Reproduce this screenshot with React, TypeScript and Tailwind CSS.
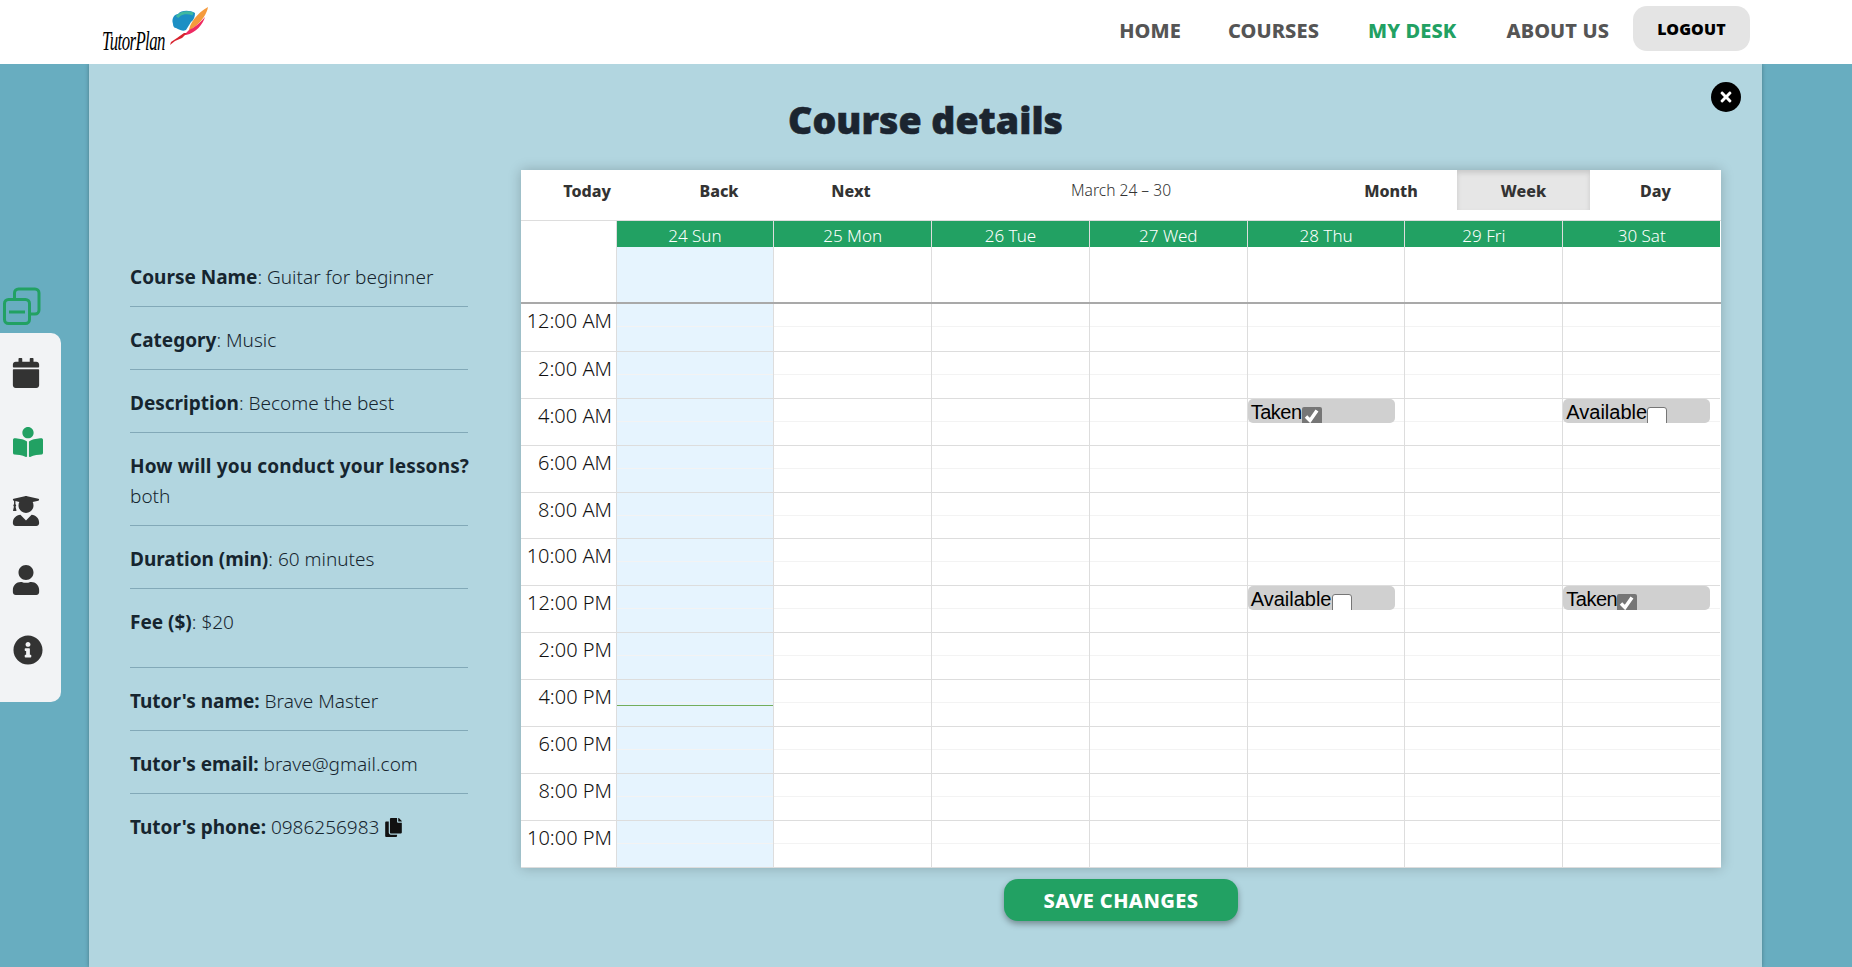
import { FaBookReader, FaCalendar, FaCopy, FaInfoCircle, FaTimes, FaUser, FaUserGraduate } from "react-icons/fa";

const font = "font-['Noto_Sans','Open_Sans',sans-serif]";

const times = ["12:00 AM", "2:00 AM", "4:00 AM", "6:00 AM", "8:00 AM", "10:00 AM", "12:00 PM", "2:00 PM", "4:00 PM", "6:00 PM", "8:00 PM", "10:00 PM"];
const days = ["24 Sun", "25 Mon", "26 Tue", "27 Wed", "28 Thu", "29 Fri", "30 Sat"];

// day index -> row index -> slot state
const events: Record<string, boolean> = { "4-2": true, "6-2": false, "4-6": false, "6-6": true };

function Slot({ taken }: { taken: boolean }) {
  return (
    <div className="absolute left-0 top-0 z-10 flex h-6 w-[147px] overflow-hidden rounded-[5px] bg-[#d0d0d0] pl-[3px] font-['Liberation_Sans',sans-serif] text-[20px] leading-6 text-black">
      <span className={`leading-[26px] ${taken ? "tracking-[-0.5px]" : ""}`}>{taken ? "Taken" : "Available"}</span>
      {taken ? (
        <span className="mt-2 flex h-5 w-5 shrink-0 items-start justify-center rounded-[2px] bg-[#767676]">
          <svg viewBox="0 0 20 20" className="h-5 w-5">
            <path d="M4 9.5 L8 13.5 L15 3.5" fill="none" stroke="#fff" strokeWidth="3.5" />
          </svg>
        </span>
      ) : (
        <span className="mt-2 h-5 w-5 shrink-0 rounded-[3px] border border-[#767676] bg-white" />
      )}
    </div>
  );
}

function Info({ label, value, tall, boldColon }: { label: string; value: string; tall?: boolean; boldColon?: boolean }) {
  return (
    <div className={`border-b border-[#82a9b8] pt-[18px] ${tall ? "pb-[30px]" : "pb-[14px]"}`}>
      <b className="font-bold">{label}{boldColon && ":"}</b>{!boldColon && ":"} {value}
    </div>
  );
}

function Calendar() {
  return (
    <div className="w-[1200px] border-b border-[#ddd] bg-white shadow-[0_0_12px_rgba(0,0,0,0.22)]">
      <div className="flex h-[50px] items-start text-[16px] font-extrabold text-[#333]">
        <button className="h-10 w-[132px] pt-[2px]">Today</button>
        <button className="h-10 w-[132px] pt-[2px]">Back</button>
        <button className="h-10 w-[132px] pt-[2px]">Next</button>
        <div className="h-10 flex-1 text-center text-[15.6px] font-light leading-10 text-[#333]">March 24 – 30</div>
        <button className="h-10 w-[132px] pt-[2px]">Month</button>
        <button className="h-10 w-[133px] bg-[#e6e6e6] pt-[2px] shadow-[inset_0_3px_5px_rgba(0,0,0,0.125)]">Week</button>
        <button className="h-10 w-[131px] pt-[2px]">Day</button>
      </div>

      <div className="grid grid-cols-[94.5px_repeat(7,157.8px)] border-t border-[#ddd]">
        <div className="h-[81px]" />
        {days.map((day, i) => (
          <div key={day} className={`h-[81px] border-l border-[#ddd] ${i === 0 ? "bg-[#e6f4fe]" : ""}`}>
            <div className="h-[26px] bg-[#22a163] text-center text-[17px] font-light leading-[29px] text-white">{day}</div>
          </div>
        ))}
      </div>

      <div className="grid grid-cols-[94.5px_repeat(7,157.8px)] border-t-2 border-[#a9a9a9]">
        {times.map((time, r) => (
          <div key={time} className="contents">
            <div className={`h-[46.9px] pr-[3.5px] text-right text-[20px] font-light leading-[34px] text-[#111] ${r ? "border-t border-[#ddd]" : ""}`}>{time}</div>
            {days.map((day, d) => (
              <div
                key={day}
                className={`relative h-[46.9px] border-l border-[#ddd] ${r ? "border-t border-t-[#ddd]" : ""} ${d === 0 ? "bg-[#e6f4fe]" : ""}`}
              >
                <div className="h-[23px] border-b border-[#f3f3f3]" />
                {`${d}-${r}` in events && <Slot taken={events[`${d}-${r}`]} />}
                {d === 0 && r === 8 && <div className="absolute inset-x-0 top-[25px] h-px bg-[#74ad5a]" />}
              </div>
            ))}
          </div>
        ))}
      </div>
    </div>
  );
}

export default function App() {
  return (
    <div className={`flex h-[967px] flex-col overflow-hidden bg-[#68adc0] ${font}`}>
      <header className="relative z-20 flex h-16 shrink-0 items-center bg-white pl-[102px] pr-[102px]">
        <div className="relative h-16 w-[110px]">
          <span className="absolute left-0 top-[25px] origin-left scale-x-[0.6] font-['Liberation_Serif',serif] text-[28px] italic leading-8 tracking-[-1px] text-black">TutorPlan</span>
          <svg viewBox="0 0 110 64" className="absolute inset-0">
            <path d="M71 24 C69 18 73 14 76 14 C79 10 88 10 93 13 C93 16 92 20 89 22 L84 30 C80 32 76 29 74 28 C72 28 71 26 71 24Z" fill="#1c8fc4" />
            <path d="M75 17 C79 12 86 12 91 14" fill="none" stroke="#3fb8a0" strokeWidth="3" />
            <path d="M106 7 C105 13 100 22 91 28 L87 31 C87 24 95 13 106 7Z" fill="#f59a3c" />
            <path d="M103 17 C101 24 94 33 84 35 L82 35 L87 30 C92 28 98 23 103 17Z" fill="#ee2a62" />
            <path d="M68 45 L73 41 L80 38 L85 33 L82 33 L75 38 L69 42Z" fill="#d8232f" />
          </svg>
        </div>
        <nav className="-mt-[2px] ml-auto flex items-center text-[20px] font-extrabold tracking-[0.1px] text-[#555]">
          <a className="mr-[47px]">HOME</a>
          <a className="mr-[49px]">COURSES</a>
          <a className="mr-[50px] text-[#22a163]">MY DESK</a>
          <a className="mr-[24px]">ABOUT US</a>
          <button className="mb-[5px] h-[45px] w-[117px] rounded-[14px] bg-[#e4e4e4] text-[16px] font-black text-black">LOGOUT</button>
        </nav>
      </header>

      <main className="relative ml-[89px] w-[1673px] flex-1 bg-[#b2d6e0] shadow-[0_0_4px_rgba(0,0,0,0.3)]">
        <button className="absolute right-[21px] top-[18px] flex h-[30px] w-[30px] items-center justify-center rounded-full bg-black text-white">
          <FaTimes size={16} />
        </button>
        <h1 className="pt-[31px] text-center text-[37.5px] font-black leading-[50px] text-[#1b2530] [-webkit-text-stroke:0.6px_#1b2530]">Course details</h1>
        <div className="mt-[25px] flex pl-[41px]">
          <div className="w-[338px] pt-[74px] text-[19px] font-light leading-[30px] text-[#16252f]">
            <Info label="Course Name" value="Guitar for beginner" />
            <Info label="Category" value="Music" />
            <Info label="Description" value="Become the best" />
            <div className="border-b border-[#82a9b8] pb-[14px] pt-[18px]">
              <b className="block whitespace-nowrap font-bold tracking-[0.14px]">How will you conduct your lessons?</b>
              both
            </div>
            <Info label="Duration (min)" value="60 minutes" />
            <Info label="Fee ($)" value="$20" tall />
            <Info label="Tutor's name" value="Brave Master" boldColon />
            <Info label="Tutor's email" value="brave@gmail.com" boldColon />
            <div className="flex items-center gap-[5px] pt-[18px]">
              <span><b className="font-bold">Tutor's phone:</b> 0986256983</span>
              <FaCopy size={19} className="text-[#111]" />
            </div>
          </div>
          <div className="ml-[53px] flex flex-col items-center">
            <Calendar />
            <button className="mt-[11px] h-[42px] w-[234px] rounded-[14px] bg-[#22a163] pt-[3px] text-[20px] font-extrabold tracking-[0.4px] text-white shadow-[0_3px_6px_rgba(0,0,0,0.35)]">SAVE CHANGES</button>
          </div>
        </div>
      </main>

      {/* floating side menu */}
      <svg viewBox="0 0 45 50" className="absolute left-0 top-[280px] h-[50px] w-[45px]" fill="none" stroke="#22a163" strokeWidth="3">
        <path d="M14.5 18 V13 a4 4 0 0 1 4-4 H35 a4 4 0 0 1 4 4 V30 a4 4 0 0 1-4 4 H30" />
        <rect x="4.5" y="19.5" width="25" height="24" rx="4" />
        <path d="M9 32 H25" />
      </svg>
      <aside className="absolute left-0 top-[333px] flex h-[369px] w-[61px] flex-col rounded-r-[10px] bg-[#f2f3f5] pl-[13px] pt-[25px] text-[#333]">
        <FaCalendar size={30} className="mb-[39px] -ml-[2px]" />
        <FaBookReader size={30} className="mb-[39px] text-[#22a163]" />
        <FaUserGraduate size={30} className="mb-[39px] -ml-[2px]" />
        <FaUser size={30} className="mb-[40px] -ml-[2px]" />
        <FaInfoCircle size={30} />
      </aside>
    </div>
  );
}
